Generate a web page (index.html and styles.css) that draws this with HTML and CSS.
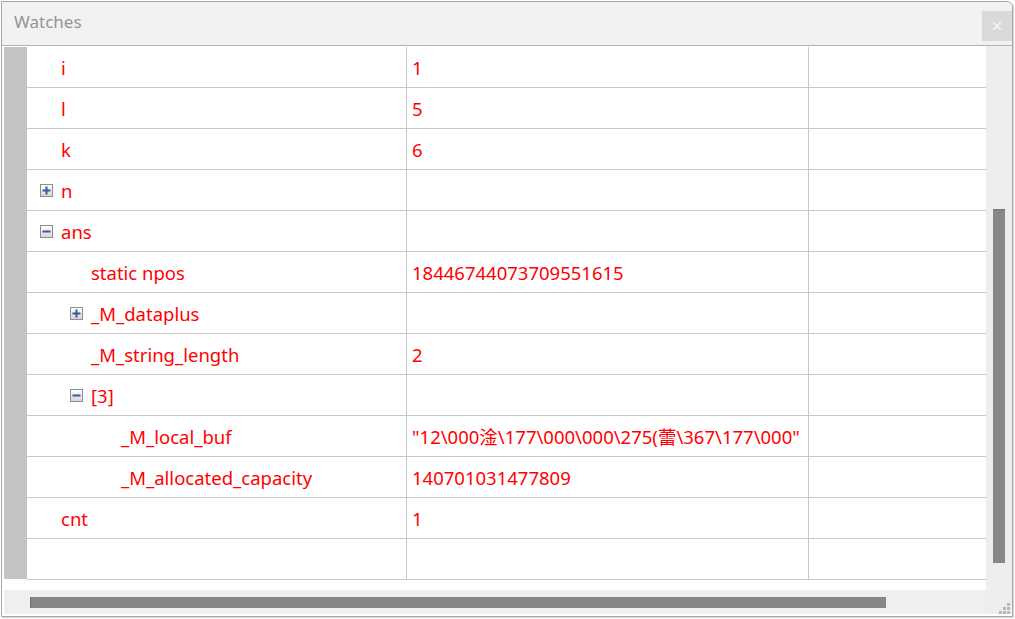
FILE: index.html
```html
<!DOCTYPE html>
<html>
<head>
<meta charset="utf-8">
<link rel="stylesheet" href="styles.css">
</head>
<body>
<div class="window">
  <div class="titlebar">
    <span class="title">Watches</span>
    <span class="close">×</span>
  </div>
  <div class="content">
    <div class="main">
      <div class="grid-area">
        <div class="gutter"></div>
        <div class="table">
          <div class="row"><div class="name l0"><span class="noexp"></span>i</div><div class="val">1</div><div class="extra"></div></div>
          <div class="row"><div class="name l0"><span class="noexp"></span>l</div><div class="val">5</div><div class="extra"></div></div>
          <div class="row"><div class="name l0"><span class="noexp"></span>k</div><div class="val">6</div><div class="extra"></div></div>
          <div class="row"><div class="name l0"><span class="exp"><svg width="11" height="11" viewBox="0 0 11 11"><path d="M1.5 5.5h8M5.5 1.5v8" stroke="#3a5a9c" stroke-width="2"/></svg></span>n</div><div class="val"></div><div class="extra"></div></div>
          <div class="row"><div class="name l0"><span class="exp"><svg width="11" height="11" viewBox="0 0 11 11"><path d="M1.5 5.5h8" stroke="#3a5a9c" stroke-width="2"/></svg></span>ans</div><div class="val"></div><div class="extra"></div></div>
          <div class="row"><div class="name l1"><span class="noexp"></span>static npos</div><div class="val">18446744073709551615</div><div class="extra"></div></div>
          <div class="row"><div class="name l1"><span class="exp"><svg width="11" height="11" viewBox="0 0 11 11"><path d="M1.5 5.5h8M5.5 1.5v8" stroke="#3a5a9c" stroke-width="2"/></svg></span>_M_dataplus</div><div class="val"></div><div class="extra"></div></div>
          <div class="row"><div class="name l1"><span class="noexp"></span>_M_string_length</div><div class="val">2</div><div class="extra"></div></div>
          <div class="row"><div class="name l1"><span class="exp"><svg width="11" height="11" viewBox="0 0 11 11"><path d="M1.5 5.5h8" stroke="#3a5a9c" stroke-width="2"/></svg></span>[3]</div><div class="val"></div><div class="extra"></div></div>
          <div class="row"><div class="name l2"><span class="noexp"></span>_M_local_buf</div><div class="val">"12\000淦\177\000\000\275(蕾\367\177\000"</div><div class="extra"></div></div>
          <div class="row"><div class="name l2"><span class="noexp"></span>_M_allocated_capacity</div><div class="val">140701031477809</div><div class="extra"></div></div>
          <div class="row"><div class="name l0"><span class="noexp"></span>cnt</div><div class="val">1</div><div class="extra"></div></div>
          <div class="row"><div class="name l0"></div><div class="val"></div><div class="extra"></div></div>
        </div>
      </div>
      <div class="hscroll"><div class="hthumb"></div></div>
    </div>
    <div class="vscroll"><div class="vthumb"></div></div>
  </div>
  <svg class="grip" width="12" height="12" viewBox="0 0 12 12">
    <rect x="8" y="0" width="3" height="3" fill="#b8b8b8"/>
    <rect x="4" y="4" width="3" height="3" fill="#b8b8b8"/>
    <rect x="8" y="4" width="3" height="3" fill="#b8b8b8"/>
    <rect x="0" y="8" width="3" height="3" fill="#b8b8b8"/>
    <rect x="4" y="8" width="3" height="3" fill="#b8b8b8"/>
    <rect x="8" y="8" width="3" height="3" fill="#b8b8b8"/>
  </svg>
</div>
</body>
</html>
```

FILE: styles.css
```css
html, body {
  margin: 0;
  padding: 0;
  background: #ffffff;
}
body {
  font-family: "Noto Sans", "Noto Sans CJK SC", sans-serif;
  width: 1015px;
  height: 619px;
  overflow: hidden;
}
.window {
  position: relative;
  margin: 1px 0 0 1px;
  width: 1010px;
  height: 614px;
  border: 1px solid #a9a9a9;
  border-top-right-radius: 6px;
  background: #ffffff;
  box-shadow: 1px 1px 1px rgba(0,0,0,0.18);
  display: flex;
  flex-direction: column;
}
.titlebar {
  height: 43px;
  background: #f2f2f2;
  border-bottom: 1px solid #b2b2b2;
  border-top-right-radius: 6px;
  display: flex;
  align-items: center;
  justify-content: space-between;
  padding-left: 12px;
}
.title {
  font-size: 17px;
  color: #959595;
  line-height: 20px;
  margin-top: -3px;
}
.close {
  width: 30px;
  height: 30px;
  background: #d9d9d9;
  color: #f4f4f4;
  font-size: 20px;
  line-height: 30px;
  text-align: center;
  align-self: flex-start;
  margin-top: 9px;
}
.content {
  flex: 1;
  display: flex;
  min-height: 0;
}
.main {
  width: 984px;
  display: flex;
  flex-direction: column;
}
.grid-area {
  display: flex;
  padding: 1px 0 0 2px;
}
.gutter {
  width: 23px;
  height: 532px;
  background: #c4c4c4;
}
.table {
  width: 959px;
}
.row {
  display: flex;
  height: 40px;
  border-bottom: 1px solid #c8c8c8;
  color: #ff0000;
  font-size: 18.5px;
}
.name, .val, .extra {
  display: flex;
  align-items: center;
  white-space: nowrap;
  overflow: hidden;
}
.name {
  width: 380px;
  box-sizing: border-box;
  border-right: 1px solid #c8c8c8;
  padding-left: 13px;
}
.name.l1 { padding-left: 43px; }
.name.l2 { padding-left: 73px; }
.val {
  width: 402px;
  box-sizing: border-box;
  border-right: 1px solid #c8c8c8;
  padding-left: 5px;
}
.extra {
  flex: 1;
}
.exp, .noexp {
  width: 13px;
  height: 13px;
  margin-right: 8px;
  flex: none;
  box-sizing: border-box;
}
.exp {
  border: 1px solid #8e8e8e;
  background: linear-gradient(#ffffff, #d6d6d6);
  display: flex;
  align-items: center;
  justify-content: center;
}
.exp svg { display: block; }
.hscroll {
  margin: 10px 0 0 2px;
  height: 24px;
  background: #efefef;
  display: flex;
  align-items: center;
}
.hthumb {
  margin-left: 26px;
  width: 855px;
  height: 11px;
  background: #868686;
  border-left: 1px solid #6e6e6e;
}
.vscroll {
  width: 26px;
  background: #eeeeee;
  height: 568px;
  position: relative;
}
.vthumb {
  margin: 163px 0 0 7px;
  width: 12px;
  height: 353px;
  background: #888888;
  border-top: 1px solid #777777;
}
.grip {
  position: absolute;
  right: 1px;
  bottom: 1px;
}
```
